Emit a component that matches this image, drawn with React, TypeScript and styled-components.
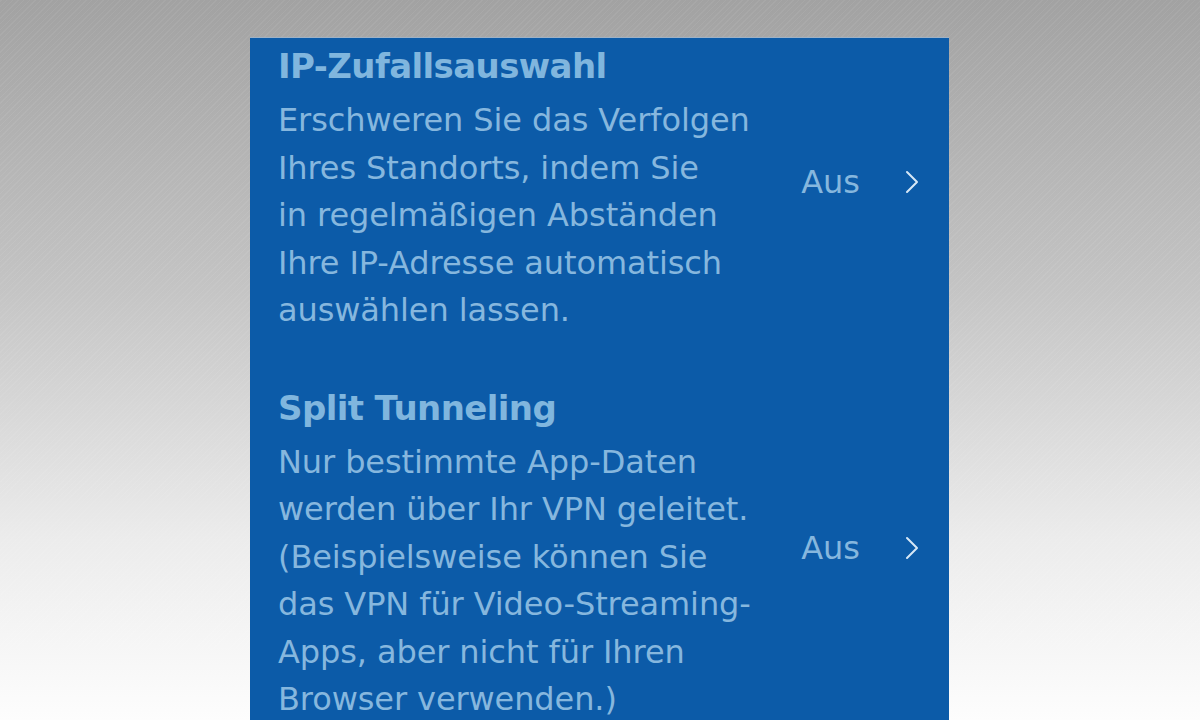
import React from "react";
import styled, { createGlobalStyle } from "styled-components";

const GlobalStyle = createGlobalStyle`
    html, body {
        margin: 0;
        padding: 0;
        height: 100%;
    }
    body {
        font-family: "DejaVu Sans", "Noto Sans", sans-serif;
        overflow: hidden;
    }
`;

const Backdrop = styled.div`
    width: 1200px;
    height: 720px;
    display: flex;
    justify-content: center;
    padding-top: 37px;
    box-sizing: border-box;
    background:
        repeating-linear-gradient(-45deg, rgba(255, 255, 255, 0.06) 0 1px, transparent 1px 4px),
        linear-gradient(to bottom, #a2a2a2 0%, #c4c4c4 40%, #ececec 75%, #fdfdfd 100%);
    overflow: hidden;
`;

const Panel = styled.div`
    width: 699px;
    margin-left: -1px;
    background: #0c5ba8;
    border-top: 1px solid #9fb2c6;
    padding: 4px 30px 0 28px;
    box-sizing: border-box;
    display: flex;
    flex-direction: column;
    gap: 49px;
`;

const Row = styled.div`
    display: flex;
    align-items: center;
`;

const TextColumn = styled.div`
    flex: 1;
    display: flex;
    flex-direction: column;
`;

const Title = styled.div`
    color: #80b6de;
    font-size: 34px;
    font-weight: bold;
    line-height: 48px;
    letter-spacing: -0.6px;
`;

const Description = styled.div`
    color: #86b7de;
    font-size: 32px;
    line-height: 47.5px;
    letter-spacing: -0.1px;
    margin-top: 7px;
    white-space: pre-line;
`;

const Status = styled.div`
    display: flex;
    align-items: center;
    gap: 45px;
    margin-bottom: 12px;
    color: #86b7de;
    font-size: 32px;
`;

const Chevron = styled.svg`
    width: 14px;
    height: 24px;
    display: block;
`;

interface ISettingRowProps {
    title: string;
    text: string;
    value: string;
}

const SettingRow: React.FC<ISettingRowProps> = ({ title, text, value }) => (
    <Row>
        <TextColumn>
            <Title>{title}</Title>
            <Description>{text}</Description>
        </TextColumn>
        <Status>
            <span>{value}</span>
            <Chevron viewBox="0 0 14 24">
                <path d="M2 2 L12 12 L2 22" fill="none" stroke="#d6e7f6" strokeWidth="2" strokeLinecap="round" strokeLinejoin="round" />
            </Chevron>
        </Status>
    </Row>
);

export default function App() {
    return (
        <>
            <GlobalStyle />
            <Backdrop>
                <Panel>
                    <SettingRow
                        title="IP-Zufallsauswahl"
                        text={"Erschweren Sie das Verfolgen\nIhres Standorts, indem Sie\nin regelmäßigen Abständen\nIhre IP-Adresse automatisch\nauswählen lassen."}
                        value="Aus"
                    />
                    <SettingRow
                        title="Split Tunneling"
                        text={"Nur bestimmte App-Daten\nwerden über Ihr VPN geleitet.\n(Beispielsweise können Sie\ndas VPN für Video-Streaming-\nApps, aber nicht für Ihren\nBrowser verwenden.)"}
                        value="Aus"
                    />
                </Panel>
            </Backdrop>
        </>
    );
}
